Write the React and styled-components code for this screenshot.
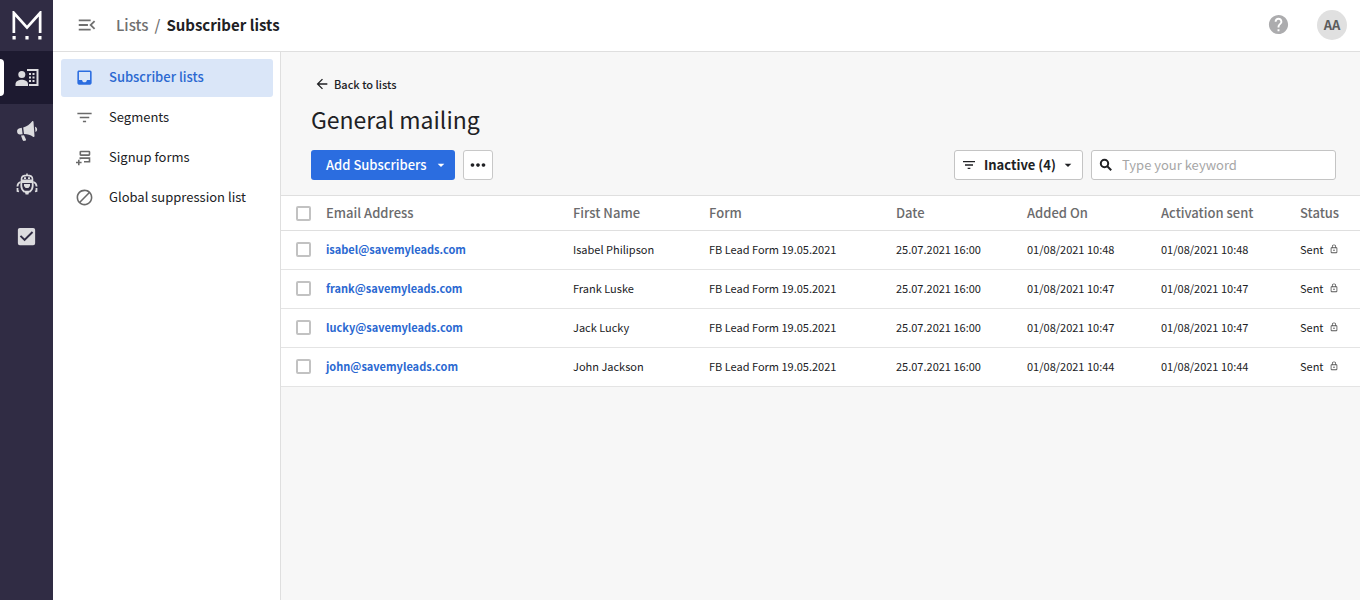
import React, { useState } from "react";
import styled, { createGlobalStyle, ThemeProvider } from "styled-components";
import {
  MdArrowBack,
  MdArrowDropDown,
  MdBlock,
  MdCheckBox,
  MdFilterList,
  MdHelp,
  MdInbox,
  MdLockOutline,
  MdMenuOpen,
  MdMoreHoriz,
} from "react-icons/md";

const theme = {
  railColor: "#302c44",
  railActive: "#1d1a30",
  accentColor: "#2b6de0",
  linkColor: "#2a68d1",
  contentColor: "#202124",
  mutedColor: "#707070",
  borderColor: "#dfdfdf",
};

const GlobalStyle = createGlobalStyle`
  * {
    box-sizing: border-box;
  }
  body {
    margin: 0;
    font-family: "Noto Sans CJK SC", "Noto Sans", sans-serif;
    font-size: 13px;
    line-height: 20px;
    color: #202124;
    background: #f7f7f7;
  }
  button,
  input,
  select {
    font: inherit;
    color: inherit;
  }
  a {
    color: inherit;
    text-decoration: none;
  }
  svg {
    display: block;
    flex: none;
  }
`;

const Layout = styled.div`
  display: flex;
  min-height: 100vh;
`;

const Rail = styled.nav`
  flex: none;
  width: 53px;
  background: ${(props) => props.theme.railColor};
`;

const Logo = styled.a`
  display: flex;
  align-items: center;
  justify-content: center;
  height: 51px;
`;

const RailLink = styled.a`
  display: flex;
  align-items: center;
  justify-content: center;
  position: relative;
  height: 53px;
  color: #dcdcdf;
  background: ${(props) => (props.$active ? props.theme.railActive : "none")};
  &::before {
    content: "";
    display: ${(props) => (props.$active ? "block" : "none")};
    position: absolute;
    left: 0;
    top: 8px;
    bottom: 8px;
    width: 4px;
    border-radius: 0 4px 4px 0;
    background: #fff;
  }
`;

const Page = styled.div`
  display: flex;
  flex-direction: column;
  flex: 1;
  min-width: 0;
`;

const TopBar = styled.header`
  display: flex;
  align-items: center;
  height: 52px;
  padding: 0 13px 2px 23px;
  background: #fff;
  border-bottom: 1px solid ${(props) => props.theme.borderColor};
`;

const IconButton = styled.button`
  display: flex;
  padding: 0;
  border: 0;
  background: none;
  cursor: pointer;
  color: ${(props) => props.$color || props.theme.mutedColor};
`;

const Breadcrumb = styled.div`
  display: flex;
  flex: 1;
  gap: 6px;
  margin-left: 18px;
  font-size: 15px;
  line-height: 22px;
  font-weight: 500;
  color: ${(props) => props.theme.mutedColor};
  strong {
    font-weight: 700;
    color: ${(props) => props.theme.contentColor};
  }
`;

const Avatar = styled.button`
  width: 30px;
  height: 30px;
  margin-left: 27px;
  padding: 0;
  border: 0;
  border-radius: 50%;
  background: #e0e0e0;
  color: #5c5c5c;
  line-height: 20px;
  font-weight: 700;
`;

const Body = styled.div`
  display: flex;
  flex: 1;
`;

const SideMenu = styled.nav`
  display: flex;
  flex-direction: column;
  gap: 2px;
  flex: none;
  width: 228px;
  padding: 7px 7px 0 8px;
  background: #fff;
  border-right: 1px solid ${(props) => props.theme.borderColor};
`;

const MenuLink = styled.a`
  display: flex;
  align-items: center;
  gap: 15px;
  height: 38px;
  padding: 0 14px 2px;
  border-radius: 3px;
  font-weight: ${(props) => (props.$active ? 500 : 400)};
  color: ${(props) => (props.$active ? props.theme.linkColor : "inherit")};
  background: ${(props) => (props.$active ? "#dae6f8" : "none")};
  svg {
    color: ${(props) => (props.$active ? props.theme.accentColor : "#6a6a6a")};
  }
`;

const Main = styled.main`
  flex: 1;
  min-width: 0;
`;

const Heading = styled.div`
  padding: 22px 24px 15px 30px;
`;

const BackLink = styled.a`
  display: inline-flex;
  align-items: center;
  gap: 4px;
  padding-left: 3px;
  font-size: 11px;
  font-weight: 500;
`;

const Title = styled.h1`
  margin: 4px 0 13px;
  font-size: 23px;
  line-height: 36px;
  font-weight: 400;
`;

const Toolbar = styled.div`
  display: flex;
  gap: 8px;
`;

const Spacer = styled.div`
  flex: 1;
`;

const AddButton = styled.button`
  display: flex;
  align-items: center;
  gap: 6px;
  height: 30px;
  padding: 0 6px 0 15px;
  border: 0;
  border-radius: 3px;
  background: ${(props) => props.theme.accentColor};
  color: #fff;
  font-weight: 500;
  cursor: pointer;
`;

const MoreButton = styled.button`
  display: flex;
  align-items: center;
  justify-content: center;
  width: 30px;
  height: 30px;
  padding: 0;
  border: 1px solid #c8c8c8;
  border-radius: 3px;
  background: #fff;
`;

const Field = styled.label`
  display: flex;
  align-items: center;
  height: 30px;
  padding: 0 6px;
  border: 1px solid #c4c4c4;
  border-radius: 3px;
  background: #fff;
`;

const FilterSelect = styled.select`
  appearance: none;
  margin: 0 4px 0 7px;
  padding: 0;
  border: 0;
  outline: 0;
  background: none;
  font-weight: 700;
`;

const SearchInput = styled.input`
  width: 207px;
  margin-left: 8px;
  padding: 0;
  border: 0;
  outline: 0;
  background: none;
  &::placeholder {
    color: #a6a6a6;
    opacity: 1;
  }
`;

const Table = styled.table`
  width: 100%;
  table-layout: fixed;
  border-collapse: separate;
  border-spacing: 0;
  border-top: 1px solid ${(props) => props.theme.borderColor};
  background: #fff;
  text-align: left;
  white-space: nowrap;
`;

const HeadCell = styled.th`
  width: ${(props) => props.$width || "auto"};
  height: 35px;
  padding: 0;
  border-bottom: 1px solid ${(props) => props.theme.borderColor};
  font-weight: 500;
  color: #6b6b6d;
`;

const Cell = styled.td`
  height: 39px;
  padding: 0 0 2px;
  border-bottom: 1px solid #e4e4e4;
  font-size: 11px;
`;

const Checkbox = styled.input`
  display: block;
  appearance: none;
  width: 15px;
  height: 15px;
  margin: 0 0 0 15px;
  border: 2px solid #c2c2c2;
  border-radius: 2px;
  background: #fff;
  &:checked {
    border-color: ${(props) => props.theme.accentColor};
    background: ${(props) => props.theme.accentColor};
  }
`;

const EmailLink = styled.a`
  font-weight: 700;
  color: ${(props) => props.theme.linkColor};
`;

const Status = styled.span`
  display: flex;
  align-items: center;
  gap: 5px;
  svg {
    color: #555;
  }
`;

function LogoIcon() {
  return (
    <svg width="30" height="30" viewBox="0 0 30 30" fill="#fff">
      <path d="M.5 0H2l13 14.500L28 0h1.500v22h-2.700V5.500L15 18.500 3.200 5.500V22H.5z" />
      <path d="M.5 25h3.200v3.500H.5zM13.400 25h3.200v3.500h-3.200zM26.300 25h3.200v3.500h-3.200z" />
    </svg>
  );
}

function ContactsIcon() {
  return (
    <svg width="24" height="18" viewBox="0 0 24 18" fill="currentColor">
      <circle cx="6.800" cy="5.400" r="3.500" />
      <path d="M.5 17v-2c0-3 4-4.300 6.300-4.300s6.200 1.300 6.200 4.300v2z" />
      <path d="M12 0h11.500v17H14v-2h7.500V2H12z" />
      <path d="M14 4h2v2h-2zM17.500 4h2v2h-2zM14 7.500h2v2h-2zM17.500 7.500h2v2h-2zM14 11h2v2h-2zM17.500 11h2v2h-2z" />
    </svg>
  );
}

function MegaphoneIcon() {
  return (
    <svg width="22" height="22" viewBox="0 0 22 22" fill="currentColor">
      <path d="M7.200 7.500C11 6.500 13.600 4.200 16 1.500c.8-.8 1.400-.6 1.500.4l1 14c0 1-.7 1.300-1.500.8-2.700-1.700-5.500-2.800-9-2.700z" />
      <path d="M5.800 7.800l.8 6.400-2.300.3c-1.800.2-3-.9-3.200-2.700-.2-1.900.7-3.300 2.500-3.600z" />
      <path d="M5 15.600l3-.4 1.900 4c.4.9-.2 1.400-1.100 1.600-1 .2-1.800.1-2.200-.8z" />
      <path d="M19 6.700c2.600.7 2.900 4 .5 5.200z" />
    </svg>
  );
}

function RobotIcon() {
  return (
    <svg width="22" height="22" viewBox="0 0 22 22" fill="none" stroke="currentColor">
      <path d="M11 .5v2M5.500 7.200V6c0-2.400 2.400-3.600 5.500-3.600S16.500 3.600 16.500 6v1.200z" strokeWidth="1.600" />
      <path d="M8 4.300h2v1.700H8zM12 4.300h2v1.700h-2z" fill="currentColor" stroke="none" />
      <path d="M5.300 9h11.400v4c0 2.600-1.600 4.600-3 5.700H8.300c-1.400-1.100-3-3.100-3-5.700z" strokeWidth="1.800" />
      <path d="M8 11h6v2l-1.600 2H9.600L8 13zM8.600 18h4.800l-1 3.500H9.600z" fill="currentColor" stroke="none" />
      <path d="M4.500 9C2.500 9.500 1.600 11 1.400 13.500M17.500 9c2 .5 2.900 2 3.100 4.500M1.500 15v3l1.500.5M20.500 15v3l-1.500.5" strokeWidth="1.800" />
    </svg>
  );
}

function FormsIcon() {
  return (
    <svg width="19" height="19" viewBox="0 0 19 19" fill="none" stroke="currentColor" strokeWidth="1.600">
      <rect x="5.300" y="3.500" width="9.200" height="3.600" rx=".5" />
      <path d="M5.300 11.200v-1.100h9.200v3.600H9M3.800 11.700v5.600M1 14.500h5.600" />
    </svg>
  );
}

function SearchIcon() {
  return (
    <svg width="16" height="16" viewBox="0 0 16 16" fill="none" stroke="currentColor" strokeWidth="2">
      <circle cx="6.500" cy="6.500" r="3.700" />
      <path d="M9.300 9.300l3.900 3.900" />
    </svg>
  );
}

const railItems = [
  { label: "Lists", icon: <ContactsIcon />, active: true },
  { label: "Campaigns", icon: <MegaphoneIcon /> },
  { label: "Automation", icon: <RobotIcon /> },
  { label: "Tasks", icon: <MdCheckBox size={23} /> },
];

const menuItems = [
  { label: "Subscriber lists", icon: <MdInbox size={19} />, active: true },
  { label: "Segments", icon: <MdFilterList size={19} /> },
  { label: "Signup forms", icon: <FormsIcon /> },
  { label: "Global suppression list", icon: <MdBlock size={19} /> },
];

const columns = [
  { label: "Email Address" },
  { label: "First Name", width: "136px" },
  { label: "Form", width: "187px" },
  { label: "Date", width: "131px" },
  { label: "Added On", width: "134px" },
  { label: "Activation sent", width: "139px" },
  { label: "Status", width: "60px" },
];

const subscribers = [
  { email: "isabel@savemyleads.com", name: "Isabel Philipson", added: "01/08/2021 10:48" },
  { email: "frank@savemyleads.com", name: "Frank Luske", added: "01/08/2021 10:47" },
  { email: "lucky@savemyleads.com", name: "Jack Lucky", added: "01/08/2021 10:47" },
  { email: "john@savemyleads.com", name: "John Jackson", added: "01/08/2021 10:44" },
];

function SubscriberTable() {
  const [selected, setSelected] = useState([]);

  // select or clear every row at once
  const toggleAll = () => {
    setSelected(
      selected.length === subscribers.length
        ? []
        : subscribers.map((item) => item.email)
    );
  };

  const toggle = (email) => {
    setSelected(
      selected.includes(email)
        ? selected.filter((item) => item !== email)
        : [...selected, email]
    );
  };

  return (
    <Table>
      <thead>
        <tr>
          <HeadCell $width="45px">
            <Checkbox
              type="checkbox"
              aria-label="Select all"
              checked={selected.length === subscribers.length}
              onChange={toggleAll}
            />
          </HeadCell>
          {columns.map((column) => (
            <HeadCell key={column.label} $width={column.width}>
              {column.label}
            </HeadCell>
          ))}
        </tr>
      </thead>
      <tbody>
        {subscribers.map((item) => (
          <tr key={item.email}>
            <Cell>
              <Checkbox
                type="checkbox"
                aria-label={item.email}
                checked={selected.includes(item.email)}
                onChange={() => toggle(item.email)}
              />
            </Cell>
            <Cell>
              <EmailLink href="#">{item.email}</EmailLink>
            </Cell>
            <Cell>{item.name}</Cell>
            <Cell>FB Lead Form 19.05.2021</Cell>
            <Cell>25.07.2021 16:00</Cell>
            <Cell>{item.added}</Cell>
            <Cell>{item.added}</Cell>
            <Cell>
              <Status>
                Sent
                <MdLockOutline size={10} />
              </Status>
            </Cell>
          </tr>
        ))}
      </tbody>
    </Table>
  );
}

function App() {
  return (
    <ThemeProvider theme={theme}>
      <GlobalStyle />
      <Layout>
        <Rail>
          <Logo href="#" aria-label="Home">
            <LogoIcon />
          </Logo>
          {railItems.map((item) => (
            <RailLink
              key={item.label}
              href="#"
              aria-label={item.label}
              $active={item.active}
            >
              {item.icon}
            </RailLink>
          ))}
        </Rail>
        <Page>
          <TopBar>
            <IconButton aria-label="Collapse menu">
              <MdMenuOpen size={22} />
            </IconButton>
            <Breadcrumb>
              <a href="#">Lists</a>
              <span>/</span>
              <strong>Subscriber lists</strong>
            </Breadcrumb>
            <IconButton aria-label="Help" $color="#acacae">
              <MdHelp size={23} />
            </IconButton>
            <Avatar>AA</Avatar>
          </TopBar>
          <Body>
            <SideMenu>
              {menuItems.map((item) => (
                <MenuLink key={item.label} href="#" $active={item.active}>
                  {item.icon}
                  {item.label}
                </MenuLink>
              ))}
            </SideMenu>
            <Main>
              <Heading>
                <BackLink href="#">
                  <MdArrowBack size={16} />
                  Back to lists
                </BackLink>
                <Title>General mailing</Title>
                <Toolbar>
                  <AddButton>
                    Add Subscribers
                    <MdArrowDropDown size={16} />
                  </AddButton>
                  <MoreButton aria-label="More actions">
                    <MdMoreHoriz size={22} />
                  </MoreButton>
                  <Spacer />
                  <Field>
                    <MdFilterList size={16} />
                    <FilterSelect aria-label="Status filter">
                      <option>Inactive (4)</option>
                    </FilterSelect>
                    <MdArrowDropDown size={16} />
                  </Field>
                  <Field>
                    <SearchIcon />
                    <SearchInput
                      aria-label="Search"
                      placeholder="Type your keyword"
                    />
                  </Field>
                </Toolbar>
              </Heading>
              <SubscriberTable />
            </Main>
          </Body>
        </Page>
      </Layout>
    </ThemeProvider>
  );
}

export default App;
